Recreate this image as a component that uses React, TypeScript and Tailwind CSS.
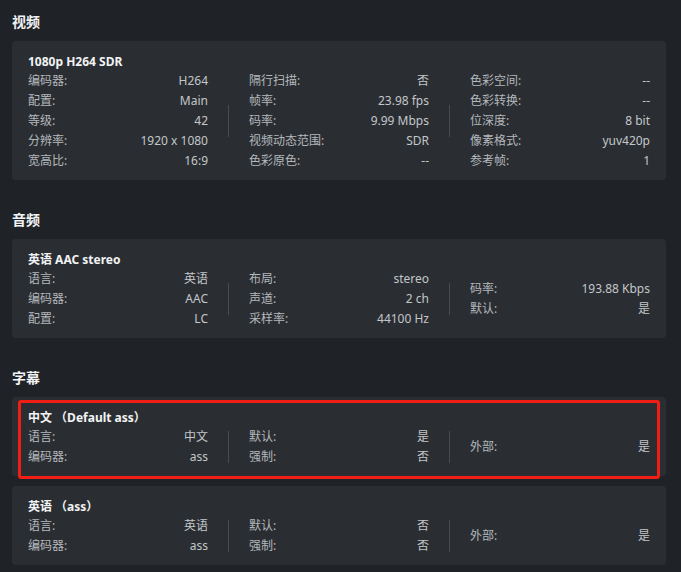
type Item = [string, string];

type Stream = {
  title: string;
  cols: Item[][];
  marked?: boolean;
};

const video: Stream[] = [
  {
    title: "1080p H264 SDR",
    cols: [
      [["编码器:", "H264"], ["配置:", "Main"], ["等级:", "42"], ["分辨率:", "1920 x 1080"], ["宽高比:", "16:9"]],
      [["隔行扫描:", "否"], ["帧率:", "23.98 fps"], ["码率:", "9.99 Mbps"], ["视频动态范围:", "SDR"], ["色彩原色:", "--"]],
      [["色彩空间:", "--"], ["色彩转换:", "--"], ["位深度:", "8 bit"], ["像素格式:", "yuv420p"], ["参考帧:", "1"]],
    ],
  },
];

const audio: Stream[] = [
  {
    title: "英语 AAC stereo",
    cols: [
      [["语言:", "英语"], ["编码器:", "AAC"], ["配置:", "LC"]],
      [["布局:", "stereo"], ["声道:", "2 ch"], ["采样率:", "44100 Hz"]],
      [["码率:", "193.88 Kbps"], ["默认:", "是"]],
    ],
  },
];

const subs: Stream[] = [
  {
    title: "中文 （Default ass）",
    marked: true,
    cols: [
      [["语言:", "中文"], ["编码器:", "ass"]],
      [["默认:", "是"], ["强制:", "否"]],
      [["外部:", "是"]],
    ],
  },
  {
    title: "英语 （ass）",
    cols: [
      [["语言:", "英语"], ["编码器:", "ass"]],
      [["默认:", "否"], ["强制:", "否"]],
      [["外部:", "是"]],
    ],
  },
];

function Column({ items }: { items: Item[] }) {
  return (
    <div className="flex-1 min-w-0">
      {items.map(([k, v]) => (
        <div key={k} className="flex justify-between leading-[20px]">
          <span className="text-[#b4b8bd]">{k}</span>
          <span className="text-[#c3c6ca]">{v}</span>
        </div>
      ))}
    </div>
  );
}

function StreamCard({ s }: { s: Stream }) {
  return (
    <div className="relative rounded bg-[#2a2e32] px-4 pt-3 pb-[9px]">
      <div className="text-[12px] font-bold leading-[18px] text-[#f2f3f4] whitespace-pre">{s.title}</div>
      <div className="flex items-center text-[12px]">
        <Column items={s.cols[0]} />
        <div className="mx-5 h-8 w-px bg-[#484c52]" />
        <Column items={s.cols[1]} />
        <div className="mx-5 h-8 w-px bg-[#484c52]" />
        <Column items={s.cols[2]} />
      </div>
      {s.marked && (
        <div className="pointer-events-none absolute left-[6px] right-[6px] top-[3px] bottom-[-3px] rounded-[3px] border-[3px] border-[#f01e14]" />
      )}
    </div>
  );
}

function Section({ title, streams, first }: { title: string; streams: Stream[]; first?: boolean }) {
  return (
    <section className={first ? "" : "mt-[30px]"}>
      <h2 className="mb-[9px] text-[14px] font-bold leading-[20px] text-[#f2f3f4]">{title}</h2>
      <div className="flex flex-col gap-[10px]">
        {streams.map((s) => (
          <StreamCard key={s.title} s={s} />
        ))}
      </div>
    </section>
  );
}

export default function App() {
  return (
    <div
      className="min-h-screen bg-[#1f2227] pl-3 pr-[15px] pt-3 pb-4"
      style={{ fontFamily: '"Noto Sans", "Noto Sans CJK SC", sans-serif' }}
    >
      <Section title="视频" streams={video} first />
      <Section title="音频" streams={audio} />
      <Section title="字幕" streams={subs} />
    </div>
  );
}
